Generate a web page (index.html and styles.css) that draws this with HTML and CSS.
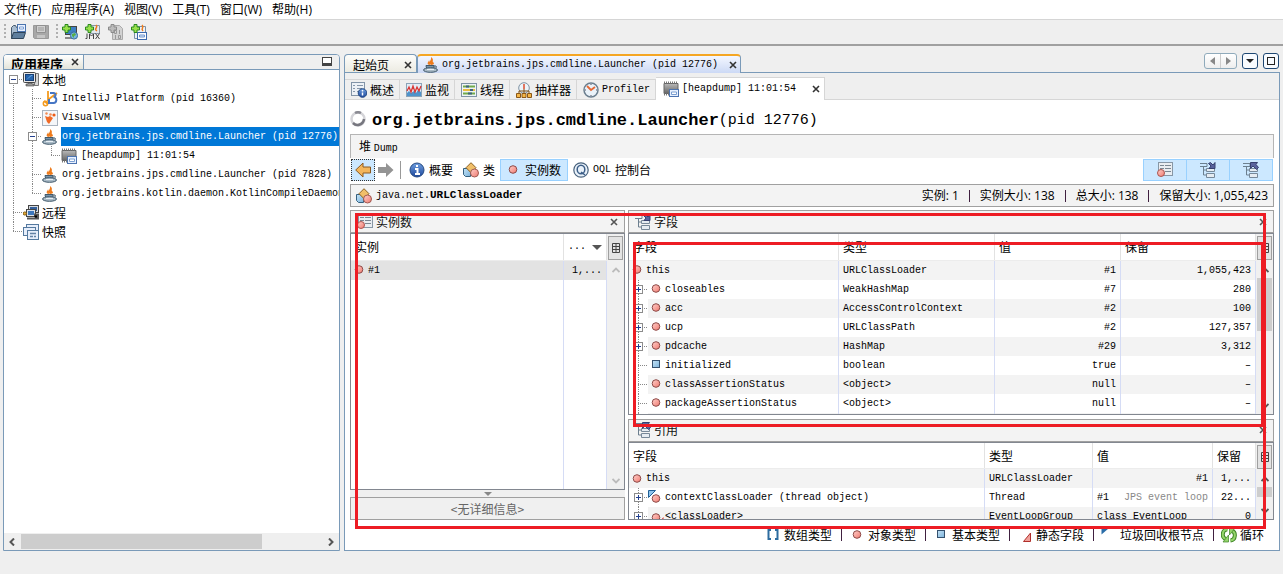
FILE: index.html
```html
<!DOCTYPE html>
<html lang="zh-CN">
<head>
<meta charset="utf-8">
<title>VisualVM</title>
<link rel="stylesheet" href="styles.css">
</head>
<body>
<svg class="sprite" aria-hidden="true">
  <defs>
    <linearGradient id="gRed" x1="0" y1="0" x2="1" y2="1"><stop offset="0" stop-color="#ffd0cb"/><stop offset="1" stop-color="#f0796f"/></linearGradient>
    <linearGradient id="gBlue" x1="0" y1="0" x2="1" y2="1"><stop offset="0" stop-color="#c5e3f6"/><stop offset="1" stop-color="#7db4dc"/></linearGradient>
    <linearGradient id="gGrey" x1="0" y1="0" x2="0" y2="1"><stop offset="0" stop-color="#b9b9b9"/><stop offset="1" stop-color="#666"/></linearGradient>
    <linearGradient id="gInfo" x1="0" y1="0" x2="0" y2="1"><stop offset="0" stop-color="#6f9fe0"/><stop offset="1" stop-color="#1d479c"/></linearGradient>
  </defs>
  <symbol id="dot" viewBox="0 0 16 16"><circle cx="8" cy="7.500" r="3.800" fill="url(#gRed)" stroke="#8d4a48"/></symbol>
  <symbol id="square" viewBox="0 0 16 16"><rect x="4.500" y="3.500" width="7" height="7" fill="url(#gBlue)" stroke="#35516e"/></symbol>
  <symbol id="java" viewBox="0 0 16 16"><path d="M8 8C4 5 9 4 8 0c4 3 0 4 3 6 0 1-1 2-3 2zM6 8C3 6 6 5 6 3c1 2 0 3 1 5z" fill="#ee7b1c"/><path d="M3 8.500h8c0 3-1 4-4 4s-4-2-4-4z" fill="#7894aa" stroke="#41596b"/><path d="M11 9h2c1 1 0 3-2 2" fill="none" stroke="#41596b"/><ellipse cx="7.500" cy="13" rx="7" ry="2.300" fill="#a9bac6" stroke="#41596b"/><path d="M4 12.500h7" stroke="#e6eef4"/></symbol>
  <symbol id="heap" viewBox="0 0 16 16"><path d="M1 2.500h14v10H1z" fill="url(#gGrey)" stroke="#666"/><path d="M1 1.500h14M1 13.500h7" stroke="#777" stroke-width="2" stroke-dasharray="1 1"/><rect x="6.500" y="8.500" width="9" height="7" fill="#e8f1ff" stroke="#4d74b0"/><path d="M8.500 11h5v2.500h-5z" fill="#fff" stroke="#7b9fd2"/></symbol>
  <symbol id="pc" viewBox="0 0 16 16"><path d="M11.500 1.500h4v12h-4z" fill="#d6d6d6" stroke="#777"/><rect x=".5" y=".5" width="12" height="10" rx="1" fill="#e7e7e7" stroke="#444"/><rect x="2.500" y="2.500" width="8" height="6" fill="#2564ad" stroke="#173f75"/><path d="M3 8l5-5h2z" fill="#69a4de"/><path d="M5 11h4v1h2v2H3v-2h2z" fill="#999" stroke="#444" stroke-width=".6"/></symbol>
  <symbol id="plus" viewBox="0 0 16 16"><path d="M3 .5h3V3h2.500v3H6v2.500H3V6H.5V3H3z" fill="#98e04c" stroke="#2b8a1f"/></symbol>
  <symbol id="addhost" viewBox="0 0 16 16"><rect x="3.500" y="2.500" width="11" height="8" fill="#3d7fc4" stroke="#444"/><path d="M3 13h7v2H3z" fill="#888"/><circle cx="12" cy="11.500" r="3.600" fill="#76b5e2" stroke="#386c9b"/><path d="M10 10l3-1 1 2-2 1 0 2-2-2z" fill="#57ad45"/><use href="#plus"/></symbol>
  <symbol id="jb" viewBox="0 0 16 16"><path d="M6 0v7M6 5v5M2 10l4 3M7 8l8-6" stroke="#f39a1e" stroke-width="1.800" fill="none"/><circle cx="3.500" cy="12.500" r="2.200" fill="none" stroke="#f39a1e" stroke-width="1.500"/><path d="M8 2h3.500c3 0 2.500 4 0 4 4 0 3.500 6 0 6H7V8" fill="none" stroke="#4676c4" stroke-width="2"/></symbol>
  <symbol id="vvm" viewBox="0 0 16 16"><rect x=".5" y=".5" width="15" height="15" fill="#f4f6f9" stroke="#a9b4c0"/><path d="M3 6l3 1 2-1 3 2-2 3-2 3-2-2z" fill="#f06a26"/><circle cx="4.500" cy="3.500" r="1.200" fill="#f38c55"/><circle cx="8.500" cy="4.500" r="1.300" fill="#f38c55"/><circle cx="12" cy="5" r="1.600" fill="#ee5c16"/></symbol>
  <symbol id="remote" viewBox="0 0 16 16"><rect x="5.500" y=".5" width="10" height="7" fill="#d6d9de" stroke="#444"/><path d="M7 2h7v4H7z" fill="#335f9c"/><rect x="3.500" y="4.500" width="9" height="7" fill="#dde2e8" stroke="#444"/><path d="M5 6h6v4H5z" fill="#3e78bd"/><path d="M4 13.500h9M11 9.500h4v4h-3M0 8.500h3" stroke="#555" stroke-width="2"/><circle cx="1.800" cy="8.500" r="1.600" fill="#e5ac35" stroke="#8d651b"/></symbol>
  <symbol id="snaps" viewBox="0 0 16 16"><g fill="#e6eefb" stroke="#54799f"><rect x="3.500" y=".5" width="12" height="9"/><rect x=".5" y="3.500" width="12" height="8"/><rect x="4.500" y="6.500" width="11" height="9"/></g><path d="M7 9.500h6M7 12.500h3M11 12.500h2" stroke="#6382a5" stroke-width="1.500"/></symbol>
  <symbol id="overview" viewBox="0 0 16 16"><rect x=".5" y=".5" width="13" height="13" fill="#edf1f6" stroke="#8294a8"/><path d="M2 3.500h2M6 3.500h6M2 6.500h2M6 6.500h5M2 9.500h2M6 9.500h2" stroke="#8797aa"/><circle cx="11.500" cy="11" r="4.300" fill="url(#gInfo)" stroke="#214782"/><path d="M11.500 8v1.500M11.500 10.500v3" stroke="#fff" stroke-width="1.500"/></symbol>
  <symbol id="monitor" viewBox="0 0 16 16"><rect x=".5" y="1.500" width="15" height="13" fill="#e3edf7" stroke="#8ba3b8"/><path d="M1 14v-3l2-2 2 2 3-2 2 2 2-3 3 2v4z" fill="#4f93cb"/><path d="M1 9l2-4 2 5 2-6 2 6 2-5 2 4 2-5" fill="none" stroke="#d93735" stroke-width="1.300"/></symbol>
  <symbol id="threads" viewBox="0 0 16 16"><rect x=".5" y="1.500" width="15" height="13" fill="#eef3f7" stroke="#7e93a5"/><path d="M2 4.500h12M2 11.500h12" stroke="#70aa4b" stroke-width="2"/><path d="M2 8h12" stroke="#eabc3f" stroke-width="2"/><path d="M5 4.500h3M9 8h3M7 11.500h4" stroke="#40627f" stroke-width="2"/></symbol>
  <symbol id="sampler" viewBox="0 0 16 16"><circle cx="8" cy="6" r="5.300" fill="#edf3f8" stroke="#7f93a4"/><path d="M8 2v5" stroke="#dd4c2f" stroke-width="1.500"/><path d="M3 11V9h10v2M8 7v4" stroke="#7b4c10" fill="none"/><g fill="#f5b647" stroke="#8b5817"><path d="M.5 11.500h4v4h-4zM6 11.500h4v4H6zM11.500 11.500h4v4h-4z"/></g></symbol>
  <symbol id="clock" viewBox="0 0 16 16"><circle cx="8" cy="8" r="7" fill="#eaf2f9" stroke="#6c7f8f" stroke-width="1.500"/><path d="M4 4l4 4 4-3" stroke="#e56834" stroke-width="1.800" fill="none"/><path d="M8 2v1M8 13v1M2 8h1M13 8h1" stroke="#556"/></symbol>
  <symbol id="spin" viewBox="0 0 16 16"><circle cx="8" cy="8" r="6.500" fill="none" stroke="#d4d4d8" stroke-width="2.500"/><path d="M3 12a6.500 6.500 0 0 0 11-4" fill="none" stroke="#77777f" stroke-width="2.500"/><path d="M5 2a6.500 6.500 0 0 1 6 0" fill="none" stroke="#8a8a92" stroke-width="2.500"/></symbol>
  <symbol id="back" viewBox="0 0 16 16"><path d="M.7 8L8 1v4h7.500v6H8v4z" fill="#f3b65c" stroke="#8c5a20"/></symbol>
  <symbol id="forward" viewBox="0 0 16 16"><path d="M15.500 8L8 1v4H0v6h8v4z" fill="#949494"/></symbol>
  <symbol id="info" viewBox="0 0 16 16"><circle cx="8" cy="8" r="7" fill="url(#gInfo)" stroke="#254a82"/><path d="M8 3v2M6 7h2.500v4M6 12h5" stroke="#fff" stroke-width="2" fill="none"/></symbol>
  <symbol id="classes" viewBox="0 0 16 16"><path d="M.5 6.500h7v8h-5l-2-2z" fill="url(#gBlue)" stroke="#35607f"/><path d="M8 .7l5 5-5 5-5-5z" fill="#f1bf69" stroke="#8a6021"/><circle cx="11.500" cy="11" r="4" fill="url(#gRed)" stroke="#a05a51"/></symbol>
  <symbol id="oql" viewBox="0 0 16 16"><circle cx="8" cy="8" r="7.200" fill="#eaf2fa" stroke="#49637e" stroke-width="1.200"/><ellipse cx="8" cy="7.500" rx="3.800" ry="4.300" fill="none" stroke="#3d5f88" stroke-width="1.500"/><path d="M8 10l4 3" stroke="#3d5f88" stroke-width="1.500"/></symbol>
  <symbol id="instances" viewBox="0 0 16 16"><rect x="1.500" y=".5" width="14" height="13" fill="#e9edf1" stroke="#8797a6"/><path d="M3 3.500h4M8 3.500h6M3 6.500h4M8 6.500h6M8 9.500h6" stroke="#7b8792"/><circle cx="4" cy="11" r="3.500" fill="url(#gRed)" stroke="#a95551"/></symbol>
  <symbol id="fields" viewBox="0 0 16 16"><path d="M0 1.500h7v3H0M3.500 4v9h3M3.500 8h3" stroke="#6c7f8f" fill="none"/><path d="M6.500 11.500h8v4h-8zM6.500 6.500h8v3h-8z" fill="#e6ecf2" stroke="#778899"/><path d="M8.500 1.500L11 4 9 6.500h6v-6L13 3l-2.500-2.500z" fill="#59629d" stroke="#36406f"/></symbol>
  <symbol id="refs" viewBox="0 0 16 16"><path d="M0 1.500h7v3H0M3.500 4v9h3M3.500 8h3" stroke="#6c7f8f" fill="none"/><path d="M6.500 11.500h8v4h-8zM6.500 6.500h8v3h-8z" fill="#e6ecf2" stroke="#778899"/><path d="M7.500.5h7L13 2.500l2.500 3-2 2L10 4 7.500 6.500z" fill="#59629d" stroke="#36406f"/></symbol>
  <symbol id="gcroot" viewBox="0 0 16 16"><path d="M.5.5h7l-7 7z" fill="#8fc4ec" stroke="#1f5f96"/><circle cx="8" cy="8.500" r="3.800" fill="url(#gRed)" stroke="#8d4a48"/></symbol>
  <symbol id="statdot" viewBox="0 0 16 16"><circle cx="8" cy="8.500" r="3.800" fill="url(#gRed)" stroke="#8d4a48"/><path d="M15.500 8v5h-4z" fill="#d82a22"/></symbol>
  <symbol id="array" viewBox="0 0 16 16"><path d="M6 3H3.500v9H6M10 3h2.500v9H10" fill="none" stroke="#2d6c9f" stroke-width="2"/></symbol>
  <symbol id="tri" viewBox="0 0 16 16"><path d="M13.500 6v8.500h-7z" fill="#f0a09a" stroke="#b02f2b"/></symbol>
  <symbol id="flag" viewBox="0 0 16 16"><path d="M.5 1.500h7l-7 6z" fill="#2a6da8"/></symbol>
  <symbol id="cycle" viewBox="0 0 16 16"><path d="M6.500 2.500C1 2 0 11 5 12M9.500 13.500C15 13 15 5 11 4" fill="none" stroke="#3d8325" stroke-width="4"/><path d="M6.500 2.500C1 2 0 11 5 12M9.500 13.500C15 13 15 5 11 4" fill="none" stroke="#94d56b" stroke-width="2"/><path d="M7.500 8v7H2zM8.500 8V1H14z" fill="#94d56b" stroke="#3d8325" stroke-width=".7"/></symbol>
  <symbol id="cols" viewBox="0 0 8 10"><path d="M.5.5h7v9h-7zM1 3.500h6M1 6.500h6M4 1v8" fill="none" stroke="#444"/></symbol>
  <symbol id="x" viewBox="0 0 8 8"><path d="M1 1l6 6M7 1L1 7" stroke="currentColor" stroke-width="1.600"/></symbol>
  <symbol id="chevl" viewBox="0 0 8 8"><path d="M6 .5L2.500 4 6 7.500" fill="none" stroke="currentColor" stroke-width="2"/></symbol>
  <symbol id="chevr" viewBox="0 0 8 8"><path d="M2 .5L5.500 4 2 7.500" fill="none" stroke="currentColor" stroke-width="2"/></symbol>
  <symbol id="chevu" viewBox="0 0 8 8"><path d="M.5 6L4 2.500 7.500 6" fill="none" stroke="currentColor" stroke-width="1.800"/></symbol>
  <symbol id="chevd" viewBox="0 0 8 8"><path d="M.5 2L4 5.500 7.500 2" fill="none" stroke="currentColor" stroke-width="1.800"/></symbol>
</svg>

<nav class="menubar">
  <button>文件(F)</button><button>应用程序(A)</button><button>视图(V)</button><button>工具(T)</button><button>窗口(W)</button><button>帮助(H)</button>
</nav>
<div class="toolbar">
  <i class="grip"></i>
  <button aria-label="打开"><svg class="ic"><use href="#open"/><path d="M1.500 14.500v-11l2-2h2l1 2h2v11z" fill="#a8bccf" stroke="#45596d"/><rect x="7.500" y=".5" width="8" height="7" fill="#e8f0ff" stroke="#4a73ad"/><path d="M9.500 3h4v2h-4z" fill="#fff" stroke="#7a9fd5"/><path d="M3.500 8.500h12l-2 6H1.500z" fill="#5e7e9d" stroke="#2e445a"/></svg></button>
  <button aria-label="保存"><svg class="ic"><path d="M.5 1.500h15v13h-14l-1-1z" fill="#a8a8a8" stroke="#999"/><path d="M3.500 1.500h9v7h-9z" fill="#d0d0d0" stroke="#909090"/><path d="M5 4h6M5 6h6" stroke="#999"/><path d="M4 11h8v3H4z" fill="#c5c5c5"/></svg></button>
  <i class="grip"></i>
  <button aria-label="添加主机"><svg class="ic"><use href="#addhost"/></svg></button>
  <button aria-label="添加 JMX"><svg class="ic"><path d="M4.500 1.500h10v8h-10z" fill="#e4e9ef" stroke="#8a98a6"/><path d="M11 1c3 3-3 3 1 6" stroke="#ee7b1c" fill="none" stroke-width="1.500"/><path d="M2 9.500v5H.5M4.500 15V10l2 2 2-2v5M10.500 9.500l4 5.500M14.500 9.500l-4 5.500" stroke="#444" fill="none"/><use href="#plus"/></svg></button>
  <button aria-label="添加转储"><svg class="ic"><path d="M4.500 1.500h7l3 3v11h-10z" fill="#d2d2d2" stroke="#aaa"/><path d="M6.500 6.500h2v3h-2zM11.500 6v4M7.500 11v4M10.500 11.500h2v3h-2z" stroke="#999" fill="none"/><path d="M3 .5h3V3h2.500v3H6v2.500H3V6H.5V3H3z" fill="#bbb" stroke="#8b8b8b"/></svg></button>
  <button aria-label="添加快照"><svg class="ic"><path d="M3.500 2.500h11v12h-11z" fill="#edf2f7" stroke="#7990a6"/><path d="M11 1c3 3-2 3 1 6" stroke="#ee7b1c" fill="none" stroke-width="1.500"/><rect x="6.500" y="8.500" width="9" height="7" fill="#fff" stroke="#3d6aad"/><path d="M8.500 11h5v2h-5z" fill="#d8e5f8" stroke="#6f95ce"/><use href="#plus"/></svg></button>
</div>

<main class="work">
  <aside class="apps">
    <header class="apps-head">
      <div class="apps-tab"><span>应用程序</span><button aria-label="关闭"><svg class="sm"><use href="#x"/></svg></button></div>
      <button class="mini" aria-label="最小化"></button>
    </header>
    <div class="tree">
      <div class="row"><span class="g start"><button class="exp minus" aria-label="折叠"></button></span><svg class="ic"><use href="#pc"/></svg><span>本地</span></div>
      <div class="row"><span class="g v"></span><span class="g t"></span><svg class="ic"><use href="#jb"/></svg><span class="m">IntelliJ Platform (pid 16360)</span></div>
      <div class="row"><span class="g v"></span><span class="g t"></span><svg class="ic"><use href="#vvm"/></svg><span class="m">VisualVM</span></div>
      <div class="row"><span class="g v"></span><span class="g t"><button class="exp minus" aria-label="折叠"></button></span><svg class="ic"><use href="#java"/></svg><span class="m sel">org.jetbrains.jps.cmdline.Launcher (pid 12776)</span></div>
      <div class="row"><span class="g v"></span><span class="g v"></span><span class="g l"></span><svg class="ic"><use href="#heap"/></svg><span class="m">[heapdump] 11:01:54</span></div>
      <div class="row"><span class="g v"></span><span class="g t"></span><svg class="ic"><use href="#java"/></svg><span class="m">org.jetbrains.jps.cmdline.Launcher (pid 7828)</span></div>
      <div class="row"><span class="g v"></span><span class="g l"></span><svg class="ic"><use href="#java"/></svg><span class="m">org.jetbrains.kotlin.daemon.KotlinCompileDaemon</span></div>
      <div class="row"><span class="g t"></span><svg class="ic"><use href="#remote"/></svg><span>远程</span></div>
      <div class="row"><span class="g l"></span><svg class="ic"><use href="#snaps"/></svg><span>快照</span></div>
    </div>
    <div class="hscroll"><svg class="sm"><use href="#chevl"/></svg><div class="track"><i class="thumb"></i></div><svg class="sm"><use href="#chevr"/></svg></div>
  </aside>

  <section class="doc">
    <div class="tabs">
      <div class="tab home"><span>起始页</span><button aria-label="关闭"><svg class="sm"><use href="#x"/></svg></button></div>
      <div class="tab on"><svg class="ic"><use href="#java"/></svg><span class="m">org.jetbrains.jps.cmdline.Launcher (pid 12776)</span><button aria-label="关闭"><svg class="sm"><use href="#x"/></svg></button></div>
      <div class="tabctl">
        <div class="pair"><button class="tri-l" aria-label="上一个"></button><button class="tri-r" aria-label="下一个"></button></div>
        <button class="ctl down" aria-label="列表"></button><button class="ctl max" aria-label="最大化"></button>
      </div>
    </div>
    <div class="docbody">
      <div class="subtabs">
        <button class="sub"><svg class="ic"><use href="#overview"/></svg>概述</button>
        <button class="sub"><svg class="ic"><use href="#monitor"/></svg>监视</button>
        <button class="sub"><svg class="ic"><use href="#threads"/></svg>线程</button>
        <button class="sub"><svg class="ic"><use href="#sampler"/></svg>抽样器</button>
        <button class="sub"><svg class="ic"><use href="#clock"/></svg><span class="m">Profiler</span></button>
        <div class="sub cur"><svg class="ic"><use href="#heap"/></svg><span class="m">[heapdump] 11:01:54</span><button aria-label="关闭"><svg class="sm"><use href="#x"/></svg></button></div>
      </div>
      <h1 class="title"><svg class="ic"><use href="#spin"/></svg><b>org.jetbrains.jps.cmdline.Launcher</b><span>(pid 12776)</span></h1>
      <div class="content">
        <div class="dumpbar">堆 <span class="m">Dump</span></div>
        <div class="views">
          <button class="back" aria-label="后退"><svg class="ic"><use href="#back"/></svg></button>
          <button aria-label="前进"><svg class="ic"><use href="#forward"/></svg></button>
          <i class="sep"></i>
          <button><svg class="ic"><use href="#info"/></svg>概要</button>
          <button><svg class="ic"><use href="#classes"/></svg>类</button>
          <button class="active"><svg class="ic"><use href="#dot"/></svg>实例数</button>
          <button><svg class="ic"><use href="#oql"/></svg><span class="m">OQL</span>控制台</button>
          <div class="toggles">
            <button aria-label="实例"><svg class="ic"><use href="#instances"/></svg></button><button aria-label="字段"><svg class="ic"><use href="#fields"/></svg></button><button aria-label="引用"><svg class="ic"><use href="#refs"/></svg></button>
          </div>
        </div>
        <div class="classbar">
          <svg class="ic"><use href="#classes"/></svg><span class="m">java.net.<b>URLClassLoader</b></span>
          <div class="stats"><span>实例: 1</span><i></i><span>实例大小: 138</span><i></i><span>总大小: 138</span><i></i><span>保留大小: 1,055,423</span></div>
        </div>
        <div class="panes">
          <div class="pane-left">
            <div class="ptitle"><svg class="ic"><use href="#instances"/></svg>实例数<button aria-label="关闭"><svg class="sm"><use href="#x"/></svg></button></div>
            <div class="grid">
              <table class="list">
                <colgroup><col><col class="w42"></colgroup>
                <thead><tr><th>实例</th><th><div class="sort"><span class="m">...</span><i class="desc"></i></div></th></tr></thead>
                <tbody>
                  <tr class="picked"><td><div class="node"><svg class="ic"><use href="#dot"/></svg><span class="m">#1</span></div></td><td class="m r">1,...</td></tr>
                  <tr class="fill"><td></td><td></td></tr>
                </tbody>
              </table>
              <div class="vscroll off"><button class="colbtn" aria-label="列"><svg class="cols"><use href="#cols"/></svg></button><svg class="sm"><use href="#chevu"/></svg><div class="track"></div><svg class="sm"><use href="#chevd"/></svg></div>
            </div>
            <div class="splitter"><i></i></div>
            <div class="details">&lt;无详细信息&gt;</div>
          </div>
          <div class="pane-right">
            <div class="ptitle"><svg class="ic"><use href="#fields"/></svg>字段<button aria-label="关闭"><svg class="sm"><use href="#x"/></svg></button></div>
            <div class="grid fgrid">
              <div class="clip">
              <table class="striped">
                <colgroup><col><col class="w156"><col class="w126"><col class="w135"></colgroup>
                <thead><tr><th>字段</th><th>类型</th><th>值</th><th>保留</th></tr></thead>
                <tbody>
                  <tr><td><div class="node"><svg class="ic"><use href="#dot"/></svg><span class="m">this</span></div></td><td class="m">URLClassLoader</td><td class="m r">#1</td><td class="m r">1,055,423</td></tr>
                  <tr><td><div class="node"><span class="g t"><button class="exp" aria-label="展开"></button></span><svg class="ic"><use href="#dot"/></svg><span class="m">closeables</span></div></td><td class="m">WeakHashMap</td><td class="m r">#7</td><td class="m r">280</td></tr>
                  <tr><td><div class="node"><span class="g t"><button class="exp" aria-label="展开"></button></span><svg class="ic"><use href="#dot"/></svg><span class="m">acc</span></div></td><td class="m">AccessControlContext</td><td class="m r">#2</td><td class="m r">100</td></tr>
                  <tr><td><div class="node"><span class="g t"><button class="exp" aria-label="展开"></button></span><svg class="ic"><use href="#dot"/></svg><span class="m">ucp</span></div></td><td class="m">URLClassPath</td><td class="m r">#2</td><td class="m r">127,357</td></tr>
                  <tr><td><div class="node"><span class="g t"><button class="exp" aria-label="展开"></button></span><svg class="ic"><use href="#dot"/></svg><span class="m">pdcache</span></div></td><td class="m">HashMap</td><td class="m r">#29</td><td class="m r">3,312</td></tr>
                  <tr><td><div class="node"><span class="g t"></span><svg class="ic"><use href="#square"/></svg><span class="m">initialized</span></div></td><td class="m">boolean</td><td class="m r">true</td><td class="m r">–</td></tr>
                  <tr><td><div class="node"><span class="g t"></span><svg class="ic"><use href="#dot"/></svg><span class="m">classAssertionStatus</span></div></td><td class="m">&lt;object&gt;</td><td class="m r">null</td><td class="m r">–</td></tr>
                  <tr><td><div class="node"><span class="g t"></span><svg class="ic"><use href="#dot"/></svg><span class="m">packageAssertionStatus</span></div></td><td class="m">&lt;object&gt;</td><td class="m r">null</td><td class="m r">–</td></tr>
                  <tr><td><div class="node"><span class="g v"></span></div></td><td></td><td></td><td></td></tr>
                </tbody>
              </table>
              </div>
              <div class="vscroll"><button class="colbtn" aria-label="列"><svg class="cols"><use href="#cols"/></svg></button><svg class="sm"><use href="#chevu"/></svg><div class="track"><i class="thumb tall"></i></div><svg class="sm"><use href="#chevd"/></svg></div>
            </div>
            <div class="ptitle second"><svg class="ic"><use href="#refs"/></svg>引用<button aria-label="关闭"><svg class="sm"><use href="#x"/></svg></button></div>
            <div class="grid rgrid">
              <div class="clip">
              <table class="striped">
                <colgroup><col><col class="w108"><col class="w120"><col class="w42"></colgroup>
                <thead><tr><th>字段</th><th>类型</th><th>值</th><th>保留</th></tr></thead>
                <tbody>
                  <tr><td><div class="node"><svg class="ic"><use href="#dot"/></svg><span class="m">this</span></div></td><td class="m">URLClassLoader</td><td class="m r">#1</td><td class="m r">1,...</td></tr>
                  <tr><td><div class="node"><span class="g t"><button class="exp" aria-label="展开"></button></span><svg class="ic"><use href="#gcroot"/></svg><span class="m">contextClassLoader (thread object)</span></div></td><td class="m">Thread</td><td class="m r"><span class="pairval"><span>#1</span><span class="faint">JPS event loop</span></span></td><td class="m r">22...</td></tr>
                  <tr><td><div class="node"><span class="g t"><button class="exp" aria-label="展开"></button></span><svg class="ic"><use href="#statdot"/></svg><span class="m">&lt;classLoader&gt;</span></div></td><td class="m">EventLoopGroup</td><td class="m">class EventLoop</td><td class="m r">0</td></tr>
                </tbody>
              </table>
              </div>
              <div class="vscroll"><button class="colbtn" aria-label="列"><svg class="cols"><use href="#cols"/></svg></button><svg class="sm"><use href="#chevu"/></svg><div class="track"><i class="thumb short"></i></div><svg class="sm"><use href="#chevd"/></svg></div>
            </div>
          </div>
          <i class="mark outer"></i>
          <i class="mark inner"></i>
        </div>
        <div class="legend">
          <span><svg class="ic"><use href="#array"/></svg>数组类型</span><span><svg class="ic"><use href="#dot"/></svg>对象类型</span><span><svg class="ic"><use href="#square"/></svg>基本类型</span><span><svg class="ic"><use href="#tri"/></svg>静态字段</span><span><svg class="ic"><use href="#flag"/></svg>垃圾回收根节点</span><span><svg class="ic"><use href="#cycle"/></svg>循环</span>
        </div>
      </div>
    </div>
  </section>
</main>
</body>
</html>
```

FILE: styles.css
```css
* { box-sizing: border-box; }
html, body { height: 100%; }
body {
  margin: 0;
  display: flex;
  flex-direction: column;
  background: #efefef;
  color: #000;
  font: 12px/18px "Noto Sans CJK SC", sans-serif;
  overflow: hidden;
}
button {
  font: inherit;
  color: inherit;
  background: none;
  border: 0;
  padding: 0;
  margin: 0;
  display: flex;
  align-items: center;
  justify-content: center;
}
.sprite { position: absolute; width: 0; height: 0; }
.ic { width: 16px; height: 16px; flex: none; }
.sm { width: 8px; height: 8px; flex: none; }
.cols { width: 8px; height: 10px; flex: none; }
.m { font-family: "Liberation Mono", "Noto Sans CJK SC", monospace; font-size: 10px; white-space: pre; }

.menubar { display: flex; gap: 10px; height: 20px; padding-left: 4px; background: #fff; border-bottom: 1px solid #d5d5d5; flex: none; }
.menubar button { font-family: "Open Sans", "Noto Sans CJK SC", sans-serif; }
.toolbar { display: flex; align-items: center; gap: 7px; height: 26px; padding-left: 4px; border-bottom: 2px solid #a0a0a0; flex: none; }
.grip { width: 2px; height: 16px; background: repeating-linear-gradient(#b0b0b0 0 2px, transparent 2px 4px); }
.toolbar .grip + button { margin-left: -3px; }

.work { flex: 1; min-height: 0; display: flex; gap: 4px; padding: 8px 3px 23px 3px; }

.apps { flex: 0 0 337px; display: flex; flex-direction: column; background: #fff; border: 1px solid #7a9ab8; border-radius: 4px 4px 0 0; overflow: hidden; }
.apps-head { display: flex; justify-content: space-between; height: 15px; background: #efefef; border-bottom: 1px solid #7a9ab8; flex: none; }
.apps-tab { display: flex; align-items: flex-start; gap: 8px; padding: 0 4px 0 7px; overflow: hidden; border-right: 1px solid #7a9ab8; background: linear-gradient(#fff, #e4e4da); font-size: 13px; font-weight: bold; }
.apps-tab button { margin-top: 3px; }
.mini { width: 10px; height: 9px; margin: 2px 7px 0 0; border: 1px solid #444; border-bottom-width: 3px; background: #fff; }
.tree { flex: 1; min-height: 0; overflow: hidden; }
.row, .node { display: flex; align-items: center; height: 19px; line-height: 19px; white-space: nowrap; }
.row .ic { margin-right: 3px; }
.row > .g + .ic + .m { padding-left: 1px; }
.row > .sel { background: #0078d7; color: #fff; flex: 1; overflow: hidden; }
.g { width: 19px; height: 19px; flex: none; display: flex; align-items: center; justify-content: center; background-repeat: no-repeat;
  --dv: repeating-linear-gradient(#888 0 1px, transparent 1px 2px);
  --dh: repeating-linear-gradient(90deg, #888 0 1px, transparent 1px 2px); }
.g.v { background-image: var(--dv); background-position: 9px 0; background-size: 1px 100%; }
.g.t, .g.l, .g.start { background-image: var(--dv), var(--dh); background-position: 9px 0, 9px 9px; background-size: 1px 100%, 10px 1px; }
.g.l { background-size: 1px 10px, 10px 1px; }
.g.start { background-position: 9px 9px, 9px 9px; }
.exp { width: 9px; height: 9px; border: 1px solid #8c8c8c; background: linear-gradient(#23408f, #23408f) center / 5px 1px no-repeat, linear-gradient(#23408f, #23408f) center / 1px 5px no-repeat, #fff; }
.exp.minus { background: linear-gradient(#23408f, #23408f) center / 5px 1px no-repeat, #fff; }
.hscroll { display: flex; align-items: center; height: 17px; padding: 0 4px; gap: 5px; background: #efefef; color: #555; flex: none; }
.track { flex: 1; align-self: stretch; }
.thumb { display: block; background: #cdcdcd; }
.hscroll .thumb { width: 80%; height: 15px; margin-top: 1px; }

.doc { flex: 1; min-width: 0; display: flex; flex-direction: column; }
.tabs { display: flex; height: 19px; border-bottom: 1px solid #7a9ab8; flex: none; }
.tab { display: flex; align-items: center; border: 1px solid #7a9ab8; border-bottom: 0; border-radius: 4px 4px 0 0; background: linear-gradient(#fdfdfb, #ecebe2); height: 18px; padding: 2px 4px 0 8px; }
.tab button, .sub.cur button, .apps-tab button { color: #333; }
.tab.home { width: 73px; justify-content: space-between; }
.tab.on { height: 19px; background: linear-gradient(#f4f7ff, #ccd9f5); border-top: 2px solid #f5a623; padding: 0 3px 0 5px; gap: 3px; }
.tab.on button { margin-left: 8px; }
.tabctl { display: flex; gap: 5px; margin: -1px 1px 0 auto; height: 16px; }
.pair { display: flex; width: 33px; margin-right: 0; border: 1px solid #8faabb; border-radius: 3px; background: linear-gradient(#fff, #eee); }
.pair button { flex: 1; }
.pair button + button { border-left: 1px solid #ccc; }
.tri-l::before, .tri-r::before { content: ""; border: 4px solid transparent; border-right: 5px solid #888; border-left: 0; }
.tri-r::before { border-left: 5px solid #888; border-right: 0; }
.ctl { width: 16px; border: 1px solid #1d4672; border-radius: 3px; background: #f8fbff; }
.down::before { content: ""; border: 4px solid transparent; border-top: 4px solid #222; border-bottom: 0; }
.max::before { content: ""; box-sizing: border-box; width: 8px; height: 8px; border: 1px solid #222; }

.docbody { flex: 1; min-height: 0; display: flex; flex-direction: column; background: #fff; border: 1px solid #7a9ab8; border-top: 0; }
.subtabs { display: flex; align-items: flex-end; height: 27px; background: #efefef; border-bottom: 1px solid #d6d6d6; flex: none; }
.sub { height: 20px; gap: 3px; padding: 1px 5px 0 6px; border-top: 1px solid #d6d6d6; border-right: 1px solid #d6d6d6; display: flex; align-items: center; }
.sub.cur { height: 23px; margin-bottom: -1px; background: #fff; padding: 0 4px 0 7px; }
.sub.cur button { margin-left: 13px; }
.title { display: flex; align-items: center; height: 34px; margin: 0; padding: 8px 0 0 5px; font: 15px/24px "Liberation Mono", monospace; flex: none; white-space: nowrap; }
.title .ic { margin: -5px 6px 0 0; }
.title b { font-size: 17px; }
.content { flex: 1; min-height: 0; display: flex; flex-direction: column; padding: 0 5px 6px 5px; }
.dumpbar { height: 24px; padding: 2px 8px; background: #f3f3f3; border: 1px solid #b5b5b5; border-bottom: 0; flex: none; }
.views { display: flex; align-items: center; height: 24px; padding: 0 1px; margin-bottom: 2px; flex: none; }
.views button { height: 22px; gap: 4px; padding: 0 5px; }
.views button[aria-label] { padding: 0 3px; }
.views .back { background: #cce8ff; border: 1px dotted #333; }
.sep { width: 1px; height: 18px; margin: 0 3px; background: #999; }
.views .active { background: #cce8ff; border: 1px solid #99d1ff; padding: 0 6px 0 4px; }
.toggles { display: flex; margin-left: auto; }
.toggles button { width: 44px; background: #cce8ff; border: 1px solid #99d1ff; }
.toggles button + button { margin-left: -1px; }
.classbar { display: flex; align-items: center; height: 23px; padding: 0 5px; gap: 4px; background: #f3f3f3; border: 1px solid #a0a0a0; margin-bottom: 3px; flex: none; }
.classbar b { font-size: 11px; }
.stats { display: flex; align-items: center; gap: 10px; margin-left: auto; font-family: "Open Sans", "Noto Sans CJK SC", sans-serif; white-space: nowrap; }
.stats i { width: 1px; height: 12px; background: #402040; }

.panes { flex: 1; min-height: 0; position: relative; display: flex; gap: 3px; }
.pane-left { flex: 0 0 275px; display: flex; flex-direction: column; }
.pane-right { flex: 1; min-width: 0; display: flex; flex-direction: column; }
.ptitle { display: flex; align-items: center; gap: 3px; height: 23px; padding: 0 6px; background: #f3f3f3; border: 1px solid #a0a0a0; color: #111; flex: none; }
.ptitle button { margin-left: auto; color: #555; }
.ptitle.second { margin-top: 4px; }
.grid { display: flex; border: 1px solid #828790; background: #fff; min-height: 0; overflow: hidden; }
.pane-left .grid { flex: 1; }
.fgrid { flex: 184 1 0; }
.rgrid { flex: 78 1 0; }
.clip { flex: 1; min-width: 0; overflow: hidden; }
table { width: 100%; border-collapse: collapse; table-layout: fixed; }
.list { flex: 1; height: 100%; }
.w42 { width: 43px; }
.w108 { width: 108px; }
.w120 { width: 120px; }
.w126 { width: 126px; }
.w135 { width: 135px; }
.w156 { width: 156px; }
th { height: 26px; padding: 1px 4px 0; text-align: left; font-weight: normal; border-right: 1px solid #e2e2e2; border-bottom: 1px solid #ececec; }
td { height: 19px; line-height: 19px; padding: 0 4px; border-right: 1px solid #d5dcf5; overflow: hidden; }
td:first-child { padding: 0; }
.list .fill td { height: auto; }
.r { text-align: right; }
.picked td { background: #e3e3e3; }
.striped tbody tr:nth-child(odd) { background: #f3f3f3; }
.node .g { background-color: #fff; }
.node .ic { margin-right: 1px; }
.pairval { display: flex; justify-content: space-between; }
.faint { color: #888; }
.sort { display: flex; align-items: center; justify-content: space-between; }
.desc { border: 5px solid transparent; border-top: 5px solid #555; border-bottom: 0; }
.vscroll { width: 17px; display: flex; flex-direction: column; align-items: center; gap: 4px; padding: 2px 1px 4px; background: #f0f0f0; color: #555; flex: none; }
.vscroll.off { color: #bbb; }
.colbtn { width: 15px; height: 24px; border: 1px solid #a0a0a0; background: #e3e3e3; margin-bottom: 2px; flex: none; }
.vscroll .thumb { width: 15px; }
.tall { height: 44%; }
.short { height: 10px; }
.splitter { height: 7px; display: flex; align-items: center; justify-content: center; background: #f0f0f0; flex: none; }
.splitter i { border: 4px solid transparent; border-top: 4px solid #888; border-bottom: 0; }
.details { height: 23px; line-height: 21px; text-align: center; color: #666; background: #f0f0f0; border: 1px solid #a0a0a0; flex: none; }
.mark { position: absolute; border: 3px solid #ed1c24; pointer-events: none; }
.outer { left: 5px; right: 8px; top: 3px; bottom: -9px; }
.inner { left: 283px; right: 8px; top: 32px; bottom: 93px; border-right-width: 5px; }

.legend { display: flex; justify-content: flex-end; height: 18px; margin-top: 6px; padding-right: 10px; flex: none; white-space: nowrap; }
.legend span { display: flex; align-items: center; gap: 3px; }
.legend span + span::before { content: ""; width: 1px; height: 12px; margin: 0 4px 0 9px; background: #402040; }
```
